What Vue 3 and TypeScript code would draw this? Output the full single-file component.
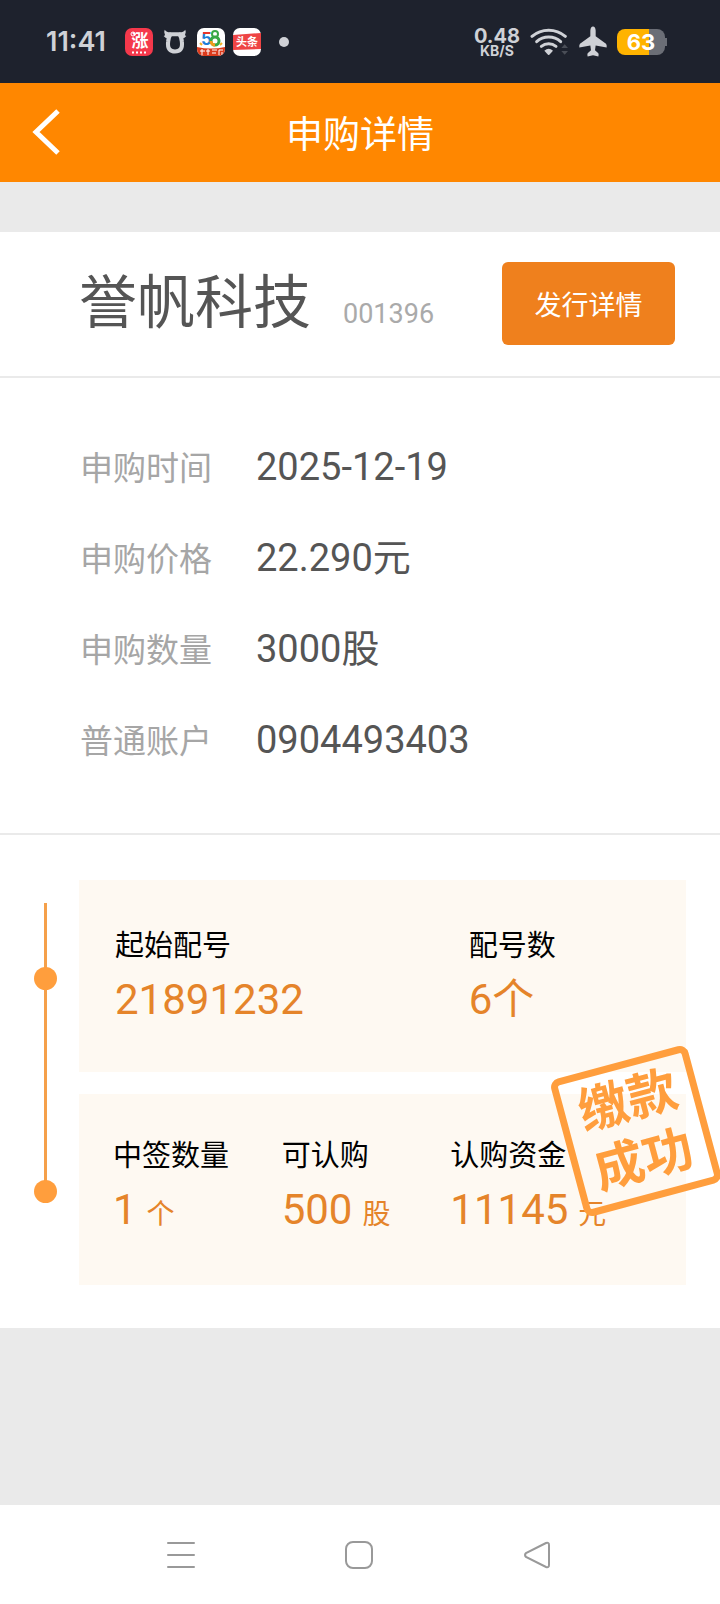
<script setup lang="ts">
interface Field {
  label: string
  value: string
}

interface Stat {
  label: string
  value: string
  unit?: string
}

const stock = { name: '誉帆科技', code: '001396' }

const fields: Field[] = [
  { label: '申购时间', value: '2025-12-19' },
  { label: '申购价格', value: '22.290元' },
  { label: '申购数量', value: '3000股' },
  { label: '普通账户', value: '0904493403' },
]

const allotment: Stat[] = [
  { label: '起始配号', value: '21891232' },
  { label: '配号数', value: '6个' },
]

const result: Stat[] = [
  { label: '中签数量', value: '1', unit: '个' },
  { label: '可认购', value: '500', unit: '股' },
  { label: '认购资金', value: '11145', unit: '元' },
]
</script>

<template>
  <div class="screen">
    <div class="status">
      <div class="status-left">
        <span class="clock">11:41</span>
        <svg class="app-icon" viewBox="0 0 28 28" aria-hidden="true">
          <rect width="28" height="28" rx="7" fill="#f5384b" />
          <text x="15" y="19" font-size="17" font-weight="700" fill="#fff" text-anchor="middle">涨</text>
          <circle cx="8" cy="6" r="2" fill="none" stroke="#fff" />
          <path d="M7 24.500h15" stroke="#fff" stroke-width="2" stroke-dasharray="2 2" />
        </svg>
        <svg class="cow" viewBox="0 0 70 72" aria-hidden="true">
          <path
            fill="none"
            stroke="#cfd1d6"
            stroke-width="12"
            d="M22 15H48Q54 22 55 36Q57 52 51 59Q46 65 35 65Q24 65 19 59Q13 52 15 36Q16 22 22 15Z"
          />
          <path fill="#cfd1d6" d="M5 2Q9 9 23 10L17 26Q8 28 2 20L6 18Q1 10 5 2ZM65 2Q61 9 47 10L53 26Q62 28 68 20L64 18Q69 10 65 2Z" />
        </svg>
        <svg class="app-icon" viewBox="0 0 28 28" aria-hidden="true">
          <defs>
            <clipPath id="tile58"><rect width="28" height="28" rx="7" /></clipPath>
          </defs>
          <g clip-path="url(#tile58)">
            <rect width="28" height="28" fill="#fff" />
            <path d="M0 19Q14 22 28 19V28H0Z" fill="#dc3b1c" />
            <path d="M3 15l2 2M25 15l-2 2" stroke="#f4b223" stroke-width="2" />
            <text x="4" y="17" font-size="17" font-weight="700" fill="#1f7fd6">5</text>
            <path d="M6 5h7" stroke="#e8352c" stroke-width="2" />
            <circle cx="18" cy="6" r="3" fill="none" stroke="#39a845" stroke-width="2" />
            <circle cx="18" cy="13" r="4" fill="none" stroke="#39a845" stroke-width="3" />
            <path d="M14 13a4 4 0 0 0 4 4" fill="none" stroke="#f39a1d" stroke-width="3" />
            <path d="M3 23h5M5 21v6M9 23h4M11 21v6M15 22h5M15 25h4M22 22h4M22 22v5M25 24v3" stroke="#fff" stroke-width="1" />
          </g>
        </svg>
        <svg class="app-icon" viewBox="0 0 28 28" aria-hidden="true">
          <rect width="28" height="28" rx="7" fill="#fff" />
          <path d="M0 7L28 5V21L0 22Z" fill="#ee4444" />
          <text x="14" y="18" font-size="11" font-weight="700" fill="#fff" text-anchor="middle">头条</text>
        </svg>
        <span class="more-dot"></span>
      </div>
      <div class="status-right">
        <div class="speed">
          <span class="rate">0.48</span>
          <span class="rate-unit">KB/S</span>
        </div>
        <svg class="wifi" viewBox="0 0 117 84" aria-hidden="true">
          <g fill="none" stroke="#cfd1d6" stroke-width="9" stroke-linecap="round">
            <path d="M6 25A77 77 0 0 1 106 25" />
            <path d="M20 41A54 54 0 0 1 92 41" />
            <path d="M34 55A35 35 0 0 1 78 55" />
          </g>
          <path d="M43 68Q56 57 69 68L58 80Q56 82 54 80Z" fill="#cfd1d6" />
          <path d="M94 60L104 49L114 60ZM94 69L104 80L114 69Z" fill="#4a4e57" />
        </svg>
        <svg class="plane" viewBox="0 0 84 92" aria-hidden="true">
          <path
            fill="#cfd1d6"
            d="M42 1Q49 1 50 13V30L81 53Q84 57 83 64L50 58L48 72L58 81Q60 85 58 91L42 87L26 91Q24 85 26 81L36 72L34 58L1 64Q0 57 3 53L34 30V13Q35 1 42 1Z"
          />
        </svg>
        <div class="battery">
          <span>63</span>
        </div>
      </div>
    </div>

    <header class="bar">
      <button class="back" type="button" aria-label="返回">
        <svg viewBox="0 0 28 46" aria-hidden="true">
          <path d="M26 2L4 23L26 44" fill="none" stroke="#fff" stroke-width="5" />
        </svg>
      </button>
      <h1>申购详情</h1>
    </header>

    <main>
      <section class="stock">
        <h2>{{ stock.name }}</h2>
        <span class="code">{{ stock.code }}</span>
        <button class="detail" type="button">发行详情</button>
      </section>

      <dl class="fields">
        <div v-for="f in fields" :key="f.label" class="field">
          <dt>{{ f.label }}</dt>
          <dd>{{ f.value }}</dd>
        </div>
      </dl>

      <section class="progress">
        <span class="track"></span>
        <div class="step">
          <span class="node"></span>
          <dl class="card two">
            <div v-for="s in allotment" :key="s.label">
              <dt>{{ s.label }}</dt>
              <dd>{{ s.value }}</dd>
            </div>
          </dl>
        </div>
        <div class="step">
          <span class="node"></span>
          <dl class="card three">
            <div v-for="s in result" :key="s.label">
              <dt>{{ s.label }}</dt>
              <dd>{{ s.value }}<small>{{ s.unit }}</small></dd>
            </div>
          </dl>
        </div>
        <div class="stamp"><span>缴款</span><span>成功</span></div>
      </section>
    </main>

    <nav class="keys">
      <button type="button" aria-label="最近任务">
        <svg viewBox="0 0 28 28" aria-hidden="true">
          <path d="M1 2H27M1 14H27M1 26H27" stroke="#999" stroke-width="2" stroke-linecap="round" />
        </svg>
      </button>
      <button type="button" aria-label="主屏幕">
        <svg viewBox="0 0 28 28" aria-hidden="true">
          <rect x="1" y="1" width="26" height="26" rx="7" fill="none" stroke="#999" stroke-width="2" />
        </svg>
      </button>
      <button type="button" aria-label="返回上一页">
        <svg viewBox="0 0 28 28" aria-hidden="true">
          <path
            d="M23 2L3 12Q1 14 3 16L23 26Q26 27 26 24V4Q26 1 23 2Z"
            fill="none"
            stroke="#999"
            stroke-width="2"
          />
        </svg>
      </button>
    </nav>
  </div>
</template>

<style>
body {
  margin: 0;
}
</style>

<style scoped>
.screen {
  display: flex;
  flex-direction: column;
  min-height: 100vh;
  overflow-x: hidden;
  background: #eaeaea;
  font-family: Roboto, 'Noto Sans CJK SC', sans-serif;
  color: #555;
}

button {
  padding: 0;
  border: 0;
  background: none;
  font: inherit;
}

svg {
  display: block;
}

h1,
h2,
dl,
dd {
  margin: 0;
  font-weight: 400;
}

.status {
  display: flex;
  justify-content: space-between;
  align-items: center;
  box-sizing: border-box;
  height: 83px;
  padding: 0 55px 0 46px;
  background: #1e222d;
  color: #cfd1d6;
  font-family: Inter, 'Noto Sans CJK SC', sans-serif;
}

.status-left,
.status-right {
  display: flex;
  align-items: center;
}

.status-left {
  gap: 8px;
}

.clock {
  width: 71px;
  font-size: 27px;
  font-weight: 600;
}

.app-icon {
  width: 28px;
  height: 28px;
}

.cow {
  width: 24px;
  height: 25px;
  margin: 0 2px;
}

.more-dot {
  width: 10px;
  height: 10px;
  margin-left: 10px;
  border-radius: 50%;
  background: #cfd1d6;
}

.status-right {
  gap: 10px;
}

.speed {
  display: flex;
  flex-direction: column;
  align-items: center;
  padding-top: 2px;
  font-weight: 700;
}

.rate {
  font-size: 20px;
  line-height: 16px;
}

.rate-unit {
  font-size: 14px;
  line-height: 14px;
}

.wifi {
  width: 39px;
  height: 28px;
}

.plane {
  width: 28px;
  height: 31px;
}

.battery {
  position: relative;
  width: 48px;
  border-radius: 8px;
  background: linear-gradient(90deg, #ffb300 66%, #6b6e76 66%);
  color: #fff;
  font-size: 22px;
  font-weight: 700;
  line-height: 26px;
  text-align: center;
}

.battery::after {
  content: '';
  position: absolute;
  top: 9px;
  right: -2px;
  width: 2px;
  height: 8px;
  background: #6b6e76;
}

.bar {
  display: grid;
  grid-template-columns: 60px 1fr 60px;
  align-items: center;
  box-sizing: border-box;
  height: 99px;
  padding-bottom: 2px;
  background: #ff8700;
  color: #fff;
}

.back {
  padding-left: 32px;
}

.back svg {
  width: 28px;
  height: 46px;
}

.bar h1 {
  font-size: 37px;
  text-align: center;
}

main {
  flex: 1;
  padding-top: 50px;
}

.stock,
.fields,
.progress {
  background: #fff;
}

.stock {
  display: flex;
  align-items: baseline;
  padding: 30px 45px 31px 79px;
  border-bottom: 2px solid #eaeaea;
}

.stock h2 {
  font-size: 58px;
  line-height: 82px;
}

.code {
  margin-left: 32px;
  font-size: 27px;
  color: #aaa;
}

.detail {
  align-self: center;
  width: 173px;
  height: 83px;
  margin-left: auto;
  border-radius: 6px;
  background: #ef801d;
  color: #fff;
  font-size: 27px;
}

.fields {
  padding: 44px 45px 47px 80px;
  border-bottom: 2px solid #eaeaea;
}

.field {
  display: flex;
  align-items: baseline;
  height: 91px;
  font-size: 38px;
  line-height: 91px;
}

.field dt {
  width: 176px;
  font-size: 33px;
  color: #a6a6a6;
}

.progress {
  position: relative;
  display: grid;
  gap: 22px;
  padding: 45px 34px 43px;
}

.track {
  position: absolute;
  top: 68px;
  bottom: 138px;
  left: 44px;
  width: 3px;
  background: #f5a04a;
}

.step {
  display: grid;
  grid-template-columns: 23px 1fr;
  gap: 22px;
}

.node {
  position: relative;
  align-self: center;
  width: 23px;
  height: 23px;
  margin-top: 4px;
  border-radius: 50%;
  background: #ff9e3d;
}

.card {
  display: grid;
  background: #fef9f2;
}

.card.two {
  grid-template-columns: 353fr 150fr;
  padding: 45px 67px 40px 36px;
}

.card.three {
  grid-template-columns: repeat(3, 1fr);
  padding: 41px 67px 43px 34px;
}

.card dt {
  height: 43px;
  font-size: 29px;
  line-height: 43px;
  color: #000;
  white-space: nowrap;
}

.card dd {
  height: 64px;
  font-size: 42px;
  line-height: 64px;
  color: #e5842a;
  white-space: nowrap;
}

.card small {
  margin-left: 10px;
  font-size: 28px;
}

.stamp {
  position: absolute;
  top: 225px;
  right: 13px;
  display: flex;
  flex-direction: column;
  align-items: center;
  justify-content: center;
  box-sizing: border-box;
  width: 142px;
  height: 142px;
  border: 7px solid #ff9e3d;
  border-radius: 9px;
  color: #ff9e3d;
  font-size: 50px;
  font-weight: 700;
  line-height: 61px;
  transform: rotate(-15deg);
}

.keys {
  display: flex;
  justify-content: center;
  align-items: center;
  gap: 150px;
  box-sizing: border-box;
  height: 99px;
  padding-right: 3px;
  background: #fff;
}

.keys svg {
  width: 28px;
  height: 28px;
}
</style>
